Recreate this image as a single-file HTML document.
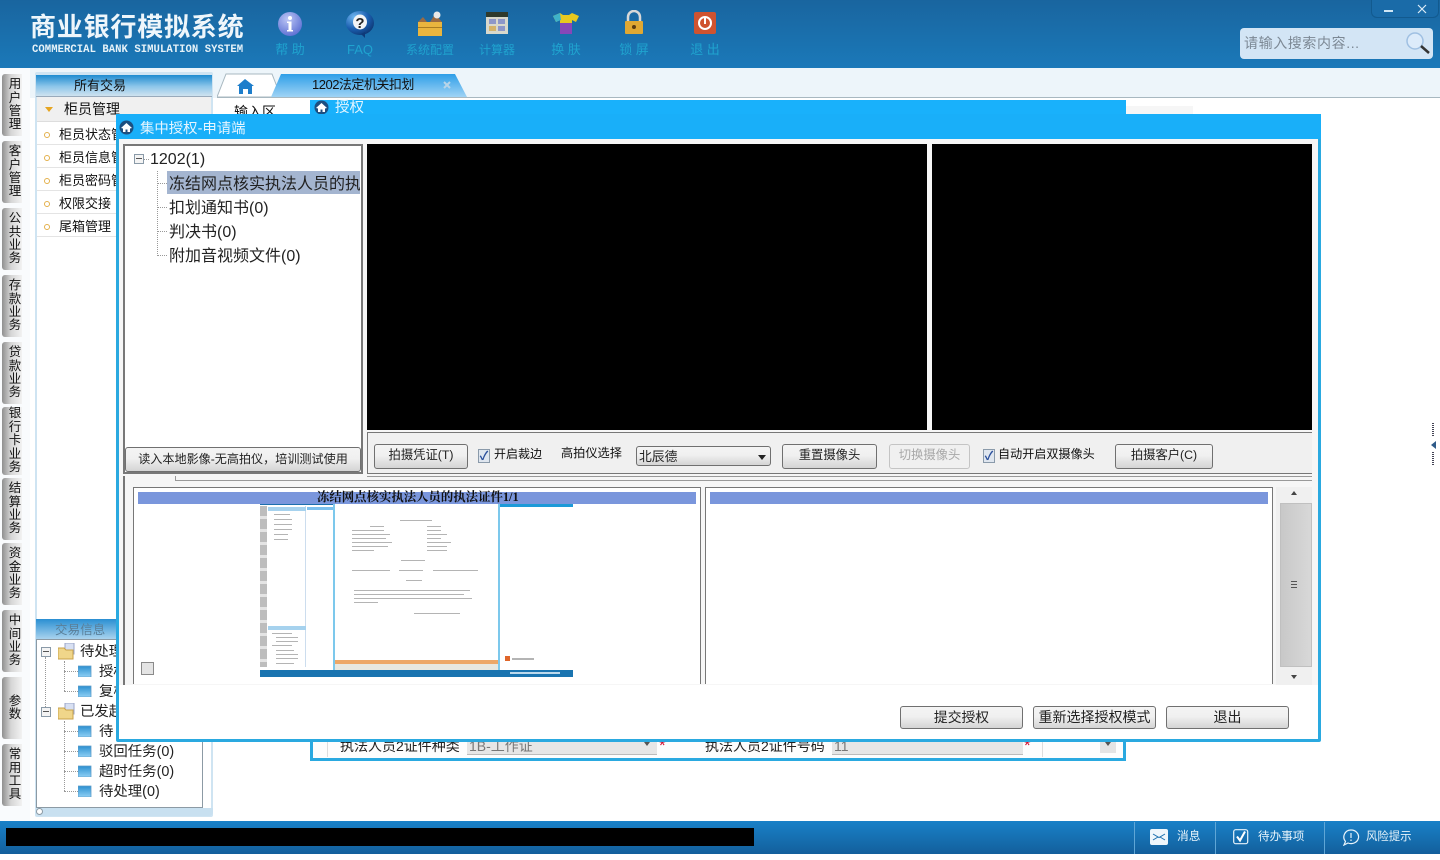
<!DOCTYPE html>
<html lang="zh"><head><meta charset="utf-8"><title>商业银行模拟系统</title>
<style>
html,body{margin:0;padding:0}
body{width:1440px;height:860px;position:relative;overflow:hidden;background:#fff;font-family:"Liberation Sans","Noto Sans CJK SC",sans-serif;color:#111}
.a{position:absolute;white-space:nowrap}
.nav{position:absolute;top:10px;width:70px;text-align:center}
.nav svg{display:block;margin:0 auto}
.nav span{position:absolute;top:32px;left:0;width:100%;font-size:13px;line-height:16px;color:#1fa3cf}
.vt{position:absolute;left:2px;width:20px;background:linear-gradient(90deg,#8f8f8f,#d6d6d6 45%,#f2f2f2);border-radius:3px 0 0 3px;font-size:12.500px;line-height:13.400px;text-align:center;display:flex;align-items:center;justify-content:center;color:#111}
.vt b{font-weight:400;display:block;width:13px;margin-left:6px;white-space:normal;word-break:break-all}
.mi{position:absolute;left:37px;width:174px;height:22px;border-bottom:1px solid #e4e4e4;font-size:13px;line-height:25px;background:#fff}
.mi i{position:absolute;left:7px;top:10px;width:4px;height:4px;border:1px solid #e3b04b;border-radius:50%}
.mi span{position:absolute;left:22px}
.btn{position:absolute;box-sizing:border-box;border:1px solid #707070;border-radius:2px;background:linear-gradient(#f4f4f4,#f0f0f0 45%,#d4d4d4);text-align:center;color:#222;white-space:nowrap}
.chk{position:absolute;box-sizing:border-box;width:12px;height:14px;border:1px solid #8a9aaa;background:#dfe6ef;color:#2a4f9c;font-size:12px;line-height:12px;text-align:center;font-weight:700}
.t{position:absolute;font-size:16px;line-height:22px;white-space:nowrap;color:#222}
.dv{position:absolute;border-left:1px dotted #999}
.dh{position:absolute;border-top:1px dotted #999}
.pm{position:absolute;box-sizing:border-box;width:10px;height:10px;border:1px solid #8a9aa8;background:#f4f4f4}
.pm:after{content:"";position:absolute;left:1px;top:3px;width:6px;height:1px;background:#555}
.bar{position:absolute;background:#b4b4b4;height:1px}
</style></head><body>

<!-- Header -->
<div class="a" style="left:0;top:0;width:1440px;height:68px;background:linear-gradient(#19659f,#1b79b9)"></div>
<div class="a" style="left:30px;top:11px;font-size:26px;line-height:32px;letter-spacing:.8px;color:#eef6fb;font-weight:700">商业银行模拟系统</div>
<div class="a" style="left:32px;top:44px;font-family:'Liberation Mono',monospace;font-size:10.600px;line-height:13px;font-weight:700;letter-spacing:.04px;color:#e6f2f8">COMMERCIAL BANK SIMULATION SYSTEM</div>

<div class="nav" style="left:255px"><svg width="28" height="28" viewBox="0 0 28 28"><defs><radialGradient id="g1" cx=".4" cy=".3" r=".8"><stop offset="0" stop-color="#bcc6f5"/><stop offset="1" stop-color="#5468d0"/></radialGradient></defs><circle cx="14" cy="14" r="12" fill="url(#g1)"/><circle cx="14" cy="8" r="2" fill="#fff"/><path d="M11 11.500h4.500V20H17v1.500h-6V20h1.500v-7H11z" fill="#fff"/></svg><span>帮 助</span></div>
<div class="nav" style="left:325px"><svg width="30" height="29" viewBox="0 0 30 29"><defs><radialGradient id="g2" cx=".3" cy=".25" r=".9"><stop offset="0" stop-color="#6fb6f0"/><stop offset=".55" stop-color="#1b5fb0"/><stop offset="1" stop-color="#0b2f66"/></radialGradient></defs><ellipse cx="15" cy="13" rx="14" ry="12" fill="url(#g2)"/><ellipse cx="15" cy="12" rx="7" ry="7.500" fill="#f2f4f6"/><path d="M16 24l4 4 0-6z" fill="#0e3a78"/><text x="15" y="18" font-size="15" font-weight="700" text-anchor="middle" fill="#222" font-family="Liberation Sans">?</text></svg><span>FAQ</span></div>
<div class="nav" style="left:395px"><svg width="28" height="28" viewBox="0 0 28 28"><rect x="2" y="12" width="24" height="14" fill="#e9b53e"/><rect x="2" y="17" width="24" height="1" fill="#a87c22"/><path d="M2 12l5-5 4 5zM14 12l5-8 7 8z" fill="#9a6a42"/><circle cx="21" cy="5" r="3.500" fill="#e8e8e8"/></svg><span style="font-size:12px">系统配置</span></div>
<div class="nav" style="left:462px"><svg width="24" height="26" viewBox="0 0 24 26"><rect x="1" y="2" width="22" height="22" fill="#d8d8cc"/><rect x="1" y="2" width="22" height="5" fill="#2f3a2d"/><rect x="4" y="9" width="7" height="5" fill="#8d97c9"/><rect x="13" y="9" width="7" height="5" fill="#8d97c9"/><rect x="4" y="16" width="7" height="5" fill="#d4b36a"/><rect x="13" y="16" width="7" height="5" fill="#8d97c9"/></svg><span style="font-size:12px">计算器</span></div>
<div class="nav" style="left:531px"><svg width="28" height="26" viewBox="0 0 28 26"><path d="M1 6l7-3 3 2h6l3-2 7 3-3 6-4-2v13H8V10l-4 2z" fill="#e8c91f"/><path d="M1 6l7-3 1 7-5 2z" fill="#3fb2c9"/><rect x="8" y="13" width="12" height="11" fill="#8747b8"/></svg><span>换 肤</span></div>
<div class="nav" style="left:599px"><svg width="22" height="26" viewBox="0 0 22 26"><path d="M5 12V7a6 6 0 0 1 12 0v5" fill="none" stroke="#d8d8d8" stroke-width="2.500"/><rect x="2" y="11" width="18" height="13" rx="1" fill="#e0a832"/><circle cx="11" cy="17" r="2" fill="#5a3b10"/></svg><span>锁 屏</span></div>
<div class="nav" style="left:670px"><svg width="24" height="26" viewBox="0 0 24 26"><rect x="1" y="2" width="22" height="22" rx="2" fill="#cf5330"/><circle cx="12" cy="13" r="6" fill="none" stroke="#fff" stroke-width="2"/><rect x="11" y="8" width="2" height="6" fill="#fff"/></svg><span>退 出</span></div>

<div class="a" style="left:1371px;top:0;width:68px;height:18px;background:#1a6ba8;border:1px solid #125a8f;border-top:0;box-sizing:border-box;border-radius:0 0 6px 6px"></div>
<div class="a" style="left:1384px;top:10px;width:9px;height:2px;background:#cfe6f5"></div>
<svg class="a" style="left:1416px;top:3px" width="12" height="12" viewBox="0 0 12 12"><path d="M2 2l8 8M10 2l-8 8" stroke="#dcecf7" stroke-width="1.200"/></svg>
<div class="a" style="left:1240px;top:28px;width:193px;height:31px;background:#d3e5f5;border-radius:4px"></div>
<div class="a" style="left:1244px;top:34px;font-size:14px;line-height:18px;letter-spacing:.6px;color:#7c8894">请输入搜索内容...</div>
<svg class="a" style="left:1405px;top:31px" width="26" height="24" viewBox="0 0 26 24"><circle cx="10" cy="10" r="8" fill="#dcebfa" stroke="#9fc0e2" stroke-width="1.500"/><path d="M16 15l8 7" stroke="#333" stroke-width="2.500"/></svg>

<!-- Tabs strip -->
<div class="a" style="left:0;top:68px;width:1440px;height:30px;background:#edf5fa"></div>
<div class="a" style="left:217px;top:97px;width:1223px;height:1px;background:#a8b8c0"></div>
<div class="a" style="left:0;top:68px;width:30px;height:753px;background:#f9fbfd"></div>
<svg class="a" style="left:217px;top:73px" width="255" height="25" viewBox="0 0 255 25">
<defs><linearGradient id="tb" x1="0" y1="0" x2="0" y2="1"><stop offset="0" stop-color="#2e9fe8"/><stop offset="1" stop-color="#9fd3f5"/></linearGradient></defs>
<path d="M0 24L9 1h46l9 23z" fill="#fff" stroke="#a8b8c0"/>
<path d="M54 24L64 1h174l12 23z" fill="url(#tb)"/>
<path d="M20 13l8-7 9 7h-2v8h-4v-5h-5v5h-4v-8z" fill="#1e7ecb"/>
<path d="M227 9l6 6M233 9l-6 6" stroke="#b8d4e8" stroke-width="2"/>
</svg>
<div class="a" style="left:312px;top:76px;font-size:13px;line-height:17px;letter-spacing:-.5px">1202法定机关扣划</div>

<!-- Left vertical tabs -->
<div class="vt" style="top:74px;height:62px"><b>用户管理</b></div>
<div class="vt" style="top:141px;height:62px"><b>客户管理</b></div>
<div class="vt" style="top:208px;height:62px"><b>公共业务</b></div>
<div class="vt" style="top:275px;height:62px"><b>存款业务</b></div>
<div class="vt" style="top:342px;height:62px"><b>贷款业务</b></div>
<div class="vt" style="top:407px;height:68px"><b>银行卡业务</b></div>
<div class="vt" style="top:478px;height:62px"><b>结算业务</b></div>
<div class="vt" style="top:543px;height:62px"><b>资金业务</b></div>
<div class="vt" style="top:610px;height:62px"><b>中间业务</b></div>
<div class="vt" style="top:677px;height:62px"><b>参数</b></div>
<div class="vt" style="top:744px;height:62px"><b>常用工具</b></div>

<!-- Left panel -->
<div class="a" style="left:35px;top:72px;width:178px;height:745px;background:#cfe4f2;border-radius:2px"></div>
<div class="a" style="left:37px;top:75px;width:174px;height:740px;background:#fff"></div>
<div class="a" style="left:36px;top:75px;width:176px;height:21px;background:linear-gradient(#1e8bd0,#8ec6ea 55%,#cfe3ef);border-bottom:1px solid #9ab"></div>
<div class="a" style="left:74px;top:77px;font-size:13px;line-height:18px">所有交易</div>
<div class="a" style="left:37px;top:97px;width:174px;height:24px;background:#f0f0f0;border-bottom:1px solid #ddd"></div>
<div class="a" style="left:45px;top:107px;width:0;height:0;border-left:4px solid transparent;border-right:4px solid transparent;border-top:5px solid #e6a521"></div>
<div class="a" style="left:64px;top:100px;font-size:14px;line-height:18px">柜员管理</div>
<div class="mi" style="top:122px"><i></i><span>柜员状态管理</span></div>
<div class="mi" style="top:145px"><i></i><span>柜员信息管理</span></div>
<div class="mi" style="top:168px"><i></i><span>柜员密码管理</span></div>
<div class="mi" style="top:191px"><i></i><span>权限交接</span></div>
<div class="mi" style="top:214px"><i></i><span>尾箱管理</span></div>

<!-- trade info -->
<div class="a" style="left:36px;top:619px;width:176px;height:20px;background:linear-gradient(#2a8fd2,#a9d3ee)"></div>
<div class="a" style="left:55px;top:621px;font-size:12.500px;line-height:18px;letter-spacing:.1px;color:#5a7f99">交易信息</div>
<div class="a" style="left:36px;top:639px;width:167px;height:169px;box-sizing:border-box;border:1px solid #8c9aa4;background:#fff"></div>
<div class="a" style="left:36px;top:808px;width:177px;height:8px;background:#c8e0f0;border-radius:0 0 4px 4px"></div>
<div class="a" style="left:36px;top:808px;width:5px;height:5px;border:1px solid #8c9aa4;border-radius:50%;background:#fff"></div>
<div class="pm" style="left:41px;top:647px"></div><div class="pm" style="left:41px;top:707px"></div>
<div class="dv" style="left:45px;top:657px;height:50px"></div>
<div class="dv" style="left:64px;top:661px;height:30px"></div>
<div class="dv" style="left:64px;top:721px;height:70px"></div>
<div class="dh" style="left:64px;top:671px;width:14px"></div><div class="dh" style="left:64px;top:691px;width:14px"></div>
<div class="dh" style="left:64px;top:731px;width:14px"></div><div class="dh" style="left:64px;top:751px;width:14px"></div><div class="dh" style="left:64px;top:771px;width:14px"></div><div class="dh" style="left:64px;top:791px;width:14px"></div>
<svg class="a" style="left:58px;top:643px" width="18" height="17" viewBox="0 0 18 17"><rect x="7" y="0" width="9" height="11" fill="#d8e0f2" stroke="#9aa6c8"/><path d="M0 5h6l2 2h7v9H0z" fill="#f0d68a" stroke="#c9a24a"/></svg>
<svg class="a" style="left:58px;top:703px" width="18" height="17" viewBox="0 0 18 17"><rect x="7" y="0" width="9" height="11" fill="#d8e0f2" stroke="#9aa6c8"/><path d="M0 5h6l2 2h7v9H0z" fill="#f0d68a" stroke="#c9a24a"/></svg>
<svg width="0" height="0" style="position:absolute"><defs><linearGradient id="fd" x1="0" y1="0" x2="0" y2="1"><stop offset="0" stop-color="#2b8fd0"/><stop offset="1" stop-color="#8fd0f5"/></linearGradient></defs></svg>
<svg class="a" style="left:78px;top:664px" width="14" height="13"><path d="M0 2h13v11H0z" fill="url(#fd)" stroke="#5d9cc8" stroke-width=".8"/></svg>
<svg class="a" style="left:78px;top:684px" width="14" height="13"><path d="M0 2h13v11H0z" fill="url(#fd)" stroke="#5d9cc8" stroke-width=".8"/></svg>
<svg class="a" style="left:78px;top:724px" width="14" height="13"><path d="M0 2h13v11H0z" fill="url(#fd)" stroke="#5d9cc8" stroke-width=".8"/></svg>
<svg class="a" style="left:78px;top:744px" width="14" height="13"><path d="M0 2h13v11H0z" fill="url(#fd)" stroke="#5d9cc8" stroke-width=".8"/></svg>
<svg class="a" style="left:78px;top:764px" width="14" height="13"><path d="M0 2h13v11H0z" fill="url(#fd)" stroke="#5d9cc8" stroke-width=".8"/></svg>
<svg class="a" style="left:78px;top:784px" width="14" height="13"><path d="M0 2h13v11H0z" fill="url(#fd)" stroke="#5d9cc8" stroke-width=".8"/></svg>
<div class="t" style="left:80px;top:641px;font-size:14.400px">待处理</div>
<div class="t" style="left:99px;top:661px;font-size:14.400px">授权</div>
<div class="t" style="left:99px;top:681px;font-size:14.400px">复核</div>
<div class="t" style="left:80px;top:701px;font-size:14.400px">已发起</div>
<div class="t" style="left:99px;top:721px;font-size:14.400px">待</div>
<div class="t" style="left:99px;top:741px;font-size:14.400px">驳回任务(0)</div>
<div class="t" style="left:99px;top:761px;font-size:14.400px">超时任务(0)</div>
<div class="t" style="left:99px;top:781px;font-size:14.400px">待处理(0)</div>

<!-- underlying content -->
<div class="a" style="left:234px;top:103px;font-size:14px;line-height:18px">输入区</div>
<div class="a" style="left:1126px;top:106px;width:67px;height:8px;background:#f6f6f6"></div>
<div class="a" style="left:310px;top:100px;width:816px;height:661px;box-sizing:border-box;border:3px solid #2aa9e0;border-top:0;background:#fdfdfd"></div>
<div class="a" style="left:310px;top:100px;width:816px;height:16px;background:#19b1fb"></div>
<svg class="a" style="left:313px;top:100px" width="17" height="15" viewBox="0 0 17 15"><circle cx="8.500" cy="7.500" r="7" fill="#1c4f80"/><path d="M3 8l5.500-5 5.500 5-2 .5v3.500H9.500V9.500h-2V12H5V8.500z" fill="#fff"/></svg>
<div class="a" style="left:335px;top:99px;font-size:14.500px;line-height:18px;color:#e4f5ff">授权</div>
<div class="a" style="left:327px;top:742px;width:1px;height:15px;background:#ddd"></div>
<div class="a" style="left:1042px;top:742px;width:1px;height:15px;background:#ddd"></div>
<div class="a" style="left:340px;top:737px;font-size:14px;line-height:18px;color:#222">执法人员2证件种类</div>
<div class="a" style="left:467px;top:741px;width:190px;height:13px;background:#e6e6e6;border-bottom:1px solid #bbb"></div>
<div class="a" style="left:469px;top:737px;font-size:14px;line-height:18px;color:#777">1B-工作证</div>
<div class="a" style="left:644px;top:742px;width:0;height:0;border-left:3px solid transparent;border-right:3px solid transparent;border-top:4px solid #555"></div>
<div class="a" style="left:659px;top:738px;font-size:17px;line-height:16px;color:#d01030">*</div>
<div class="a" style="left:705px;top:737px;font-size:14px;line-height:18px;color:#222">执法人员2证件号码</div>
<div class="a" style="left:832px;top:741px;width:191px;height:13px;background:#e6e6e6;border-bottom:1px solid #bbb"></div>
<div class="a" style="left:834px;top:737px;font-size:14px;line-height:18px;color:#777">11</div>
<div class="a" style="left:1024px;top:738px;font-size:17px;line-height:16px;color:#d01030">*</div>
<div class="a" style="left:1100px;top:741px;width:16px;height:12px;background:#e4e4e4"></div>
<div class="a" style="left:1105px;top:742px;width:0;height:0;border-left:3px solid transparent;border-right:3px solid transparent;border-top:4px solid #555"></div>

<!-- Modal -->
<div class="a" style="left:116px;top:114px;width:1205px;height:628px;box-sizing:border-box;border:3px solid #2aa9e0;border-radius:2px;background:#fff"></div>
<div class="a" style="left:116px;top:114px;width:1205px;height:25px;background:#19aff9"></div>
<svg class="a" style="left:118px;top:120px" width="17" height="15" viewBox="0 0 17 15"><circle cx="8.500" cy="7.500" r="7" fill="#1c4f80"/><path d="M3 8l5.500-5 5.500 5-2 .5v3.500H9.500V9.500h-2V12H5V8.500z" fill="#fff"/></svg>
<div class="a" style="left:140px;top:119px;font-size:14.400px;line-height:20px;color:#e4f5ff">集中授权-申请端</div>
<div class="a" style="left:119px;top:139px;width:1199px;height:546px;background:#f6f6f6"></div>

<!-- tree box -->
<div class="a" style="left:123px;top:144px;width:240px;height:330px;box-sizing:border-box;border:2px solid #787878;background:#fff"></div>
<div class="pm" style="left:134px;top:154px"></div>
<div class="dh" style="left:144px;top:159px;width:5px"></div>
<div class="t" style="left:150px;top:149px;font-size:16px">1202(1)</div>
<div class="dv" style="left:157px;top:171px;height:85px"></div>
<div class="dh" style="left:157px;top:183px;width:10px"></div><div class="dh" style="left:157px;top:207px;width:10px"></div><div class="dh" style="left:157px;top:231px;width:10px"></div><div class="dh" style="left:157px;top:255px;width:10px"></div>
<div class="a" style="left:167px;top:171px;width:193px;height:23px;background:#a4b5d0"></div>
<div class="t" style="left:169px;top:174px;width:191px;overflow:hidden;font-size:16px">冻结网点核实执法人员的执法证件</div>
<div class="t" style="left:169px;top:198px">扣划通知书(0)</div>
<div class="t" style="left:169px;top:222px">判决书(0)</div>
<div class="t" style="left:169px;top:246px">附加音视频文件(0)</div>
<div class="btn" style="left:125px;top:447px;width:236px;height:25px;font-size:12.100px;line-height:22px;border-radius:3px">读入本地影像-无高拍仪，培训测试使用</div>

<!-- video -->
<div class="a" style="left:367px;top:144px;width:560px;height:286px;background:#000"></div>
<div class="a" style="left:932px;top:144px;width:380px;height:286px;background:#000"></div>
<div class="a" style="left:367px;top:432px;width:945px;height:41px;background:#f0f0f0;border-top:1px solid #777;border-left:1px solid #777;box-sizing:border-box"></div>
<div class="a" style="left:367px;top:473px;width:945px;height:1px;background:#777"></div>
<div class="a" style="left:175px;top:480px;width:1137px;height:1px;background:#999"></div>
<div class="a" style="left:367px;top:476px;width:945px;height:1px;background:#999"></div>
<div class="a" style="left:175px;top:476px;width:1px;height:5px;background:#999"></div>

<div class="btn" style="left:374px;top:444px;width:94px;height:25px;font-size:12.300px;line-height:21px;border-radius:3px">拍摄凭证(T)</div>
<div class="chk" style="left:478px;top:449px">✓</div>
<div class="a" style="left:494px;top:445px;font-size:12px;line-height:18px">开启裁边</div>
<div class="a" style="left:561px;top:444px;font-size:12.200px;line-height:18px">高拍仪选择</div>
<div class="btn" style="left:636px;top:446px;width:135px;height:20px;font-size:12.800px;line-height:19px;text-align:left;padding-left:2px;border-radius:3px">北辰德</div>
<div class="a" style="left:758px;top:455px;width:0;height:0;border-left:4px solid transparent;border-right:4px solid transparent;border-top:5px solid #222"></div>
<div class="btn" style="left:782px;top:444px;width:95px;height:25px;font-size:12.300px;line-height:21px;border-radius:3px">重置摄像头</div>
<div class="btn" style="left:889px;top:444px;width:81px;height:25px;font-size:12.300px;line-height:21px;color:#a8a8a8;background:#f0f0f0;border-color:#c4c4c4;border-radius:3px">切换摄像头</div>
<div class="chk" style="left:983px;top:449px">✓</div>
<div class="a" style="left:998px;top:445px;font-size:12.100px;line-height:18px">自动开启双摄像头</div>
<div class="btn" style="left:1115px;top:444px;width:98px;height:25px;font-size:12.300px;line-height:21px;border-radius:3px">拍摄客户(C)</div>

<!-- image panels -->
<div class="a" style="left:123px;top:476px;width:2px;height:209px;background:#777"></div>
<div class="a" style="left:133px;top:487px;width:568px;height:197px;box-sizing:border-box;border:1px solid #777;border-bottom:0;background:#fff"></div>
<div class="a" style="left:138px;top:492px;width:558px;height:12px;background:#7a96dc"></div>
<div class="a" style="left:317px;top:489px;font-family:'Liberation Serif','Noto Serif CJK SC',serif;font-weight:700;font-size:12.400px;line-height:16px;color:#111">冻结网点核实执法人员的执法证件1/1</div>
<div class="a" style="left:705px;top:487px;width:568px;height:197px;box-sizing:border-box;border:1px solid #777;border-bottom:0;background:#fff"></div>
<div class="a" style="left:710px;top:492px;width:558px;height:12px;background:#7a96dc"></div>
<div class="chk" style="left:141px;top:662px;width:13px;height:13px;background:#e4e4e4;border-color:#8a8a8a"></div>

<!-- thumbnail -->
<div class="a" style="left:260px;top:504px;width:313px;height:173px;background:#fff;overflow:hidden">
 <div class="a" style="left:0;top:0;width:313px;height:1px;background:#1c6fae"></div>
 <div class="a" style="left:0;top:2px;width:7px;height:161px;background:repeating-linear-gradient(#bdbdbd 0 10px,#e4e4e4 10px 13px)"></div>
 <div class="a" style="left:8px;top:2px;width:38px;height:161px;border-right:1px solid #cde;box-sizing:border-box"></div>
 <div class="a" style="left:8px;top:3px;width:38px;height:4px;background:#a6d2ee"></div>
 <div class="bar" style="left:14px;top:10px;width:16px"></div><div class="bar" style="left:14px;top:15px;width:18px"></div><div class="bar" style="left:14px;top:20px;width:18px"></div><div class="bar" style="left:14px;top:25px;width:18px"></div><div class="bar" style="left:14px;top:30px;width:14px"></div><div class="bar" style="left:14px;top:35px;width:14px"></div>
 <div class="a" style="left:8px;top:122px;width:38px;height:4px;background:#a6d2ee"></div>
 <div class="bar" style="left:12px;top:129px;width:20px"></div><div class="bar" style="left:16px;top:133px;width:22px"></div><div class="bar" style="left:16px;top:137px;width:22px"></div><div class="bar" style="left:12px;top:141px;width:20px"></div><div class="bar" style="left:16px;top:146px;width:18px"></div><div class="bar" style="left:16px;top:150px;width:22px"></div><div class="bar" style="left:16px;top:154px;width:22px"></div><div class="bar" style="left:16px;top:159px;width:18px"></div>
 <div class="a" style="left:47px;top:3px;width:26px;height:3px;background:#7cc0ee"></div>
 <div class="a" style="left:239px;top:0;width:74px;height:3px;background:#1c9ad8"></div>
 <div class="a" style="left:73px;top:0;width:167px;height:166px;box-sizing:border-box;border:2px solid #7cc8ec;border-top:0;background:#fff"></div>
 <div class="bar" style="left:140px;top:16px;width:32px"></div>
 <div class="bar" style="left:110px;top:22px;width:14px"></div><div class="bar" style="left:167px;top:22px;width:14px"></div>
 <div class="bar" style="left:92px;top:26px;width:32px"></div><div class="bar" style="left:167px;top:26px;width:14px"></div>
 <div class="bar" style="left:92px;top:30px;width:38px"></div><div class="bar" style="left:167px;top:30px;width:20px"></div>
 <div class="bar" style="left:92px;top:34px;width:34px"></div><div class="bar" style="left:167px;top:34px;width:14px"></div>
 <div class="bar" style="left:92px;top:38px;width:40px"></div><div class="bar" style="left:167px;top:38px;width:24px"></div>
 <div class="bar" style="left:92px;top:42px;width:36px"></div><div class="bar" style="left:167px;top:42px;width:20px"></div>
 <div class="bar" style="left:92px;top:46px;width:22px"></div><div class="bar" style="left:167px;top:46px;width:20px"></div>
 <div class="bar" style="left:141px;top:56px;width:24px"></div>
 <div class="bar" style="left:92px;top:66px;width:38px"></div><div class="bar" style="left:139px;top:66px;width:24px"></div><div class="bar" style="left:173px;top:66px;width:45px"></div>
 <div class="bar" style="left:146px;top:76px;width:16px"></div>
 <div class="bar" style="left:94px;top:86px;width:116px"></div><div class="bar" style="left:94px;top:90px;width:110px"></div><div class="bar" style="left:94px;top:94px;width:118px"></div><div class="bar" style="left:94px;top:98px;width:24px"></div>
 <div class="bar" style="left:154px;top:109px;width:46px"></div>
 <div class="a" style="left:75px;top:156px;width:163px;height:4px;background:#eda868"></div>
 <div class="a" style="left:75px;top:160px;width:163px;height:6px;background:#e8e8e0"></div>
 <div class="a" style="left:0;top:166px;width:313px;height:7px;background:#1a74b0"></div>
 <div class="a" style="left:245px;top:152px;width:5px;height:5px;background:#e0662a"></div>
 <div class="bar" style="left:252px;top:154px;width:22px;height:2px"></div>
 <div class="a" style="left:250px;top:168px;width:50px;height:2px;background:#bcd9ec"></div>
</div>

<!-- scrollbar -->
<div class="a" style="left:1276px;top:487px;width:36px;height:198px;background:#f0f0f0"></div>
<div class="a" style="left:1280px;top:503px;width:32px;height:164px;background:linear-gradient(90deg,#c8c8c8,#d8d8d8);border:1px solid #c0c0c0;box-sizing:border-box"></div>
<div class="a" style="left:1291px;top:491px;width:0;height:0;border-left:3px solid transparent;border-right:3px solid transparent;border-bottom:4px solid #444"></div>
<div class="a" style="left:1291px;top:675px;width:0;height:0;border-left:3px solid transparent;border-right:3px solid transparent;border-top:4px solid #444"></div>
<div class="a" style="left:1291px;top:581px;width:6px;height:7px;background:repeating-linear-gradient(#555 0 1px,transparent 1px 3px)"></div>

<!-- modal footer -->
<div class="btn" style="left:900px;top:706px;width:123px;height:23px;font-size:13.800px;line-height:21px;border-radius:3px">提交授权</div>
<div class="btn" style="left:1033px;top:706px;width:123px;height:23px;font-size:14px;line-height:21px;border-radius:3px">重新选择授权模式</div>
<div class="btn" style="left:1166px;top:706px;width:123px;height:23px;font-size:14px;line-height:21px;border-radius:3px">退出</div>

<!-- right handle -->
<div class="a" style="left:1432px;top:423px;width:2px;height:14px;background:repeating-linear-gradient(#445 0 1px,transparent 1px 2px)"></div>
<div class="a" style="left:1432px;top:452px;width:2px;height:14px;background:repeating-linear-gradient(#445 0 1px,transparent 1px 2px)"></div>
<div class="a" style="left:1431px;top:441px;width:0;height:0;border-top:4px solid transparent;border-bottom:4px solid transparent;border-right:5px solid #2f5a88"></div>

<!-- Status bar -->
<div class="a" style="left:0;top:821px;width:1440px;height:33px;background:linear-gradient(#1981c8,#135f9c)"></div>
<div class="a" style="left:6px;top:828px;width:748px;height:18px;background:#000"></div>
<div class="a" style="left:1134px;top:822px;width:1px;height:32px;background:#5fa6d6"></div>
<div class="a" style="left:1215px;top:822px;width:1px;height:32px;background:#5fa6d6"></div>
<div class="a" style="left:1324px;top:822px;width:1px;height:32px;background:#5fa6d6"></div>
<svg class="a" style="left:1150px;top:829px" width="18" height="16" viewBox="0 0 18 16"><rect width="18" height="16" rx="2" fill="#eef6fb"/><path d="M3 5l6 3.500 6-3.500M3 11l5-3M15 11l-5-3" fill="none" stroke="#1a6fae" stroke-width="1"/></svg>
<div class="a" style="left:1177px;top:828px;font-size:11.700px;line-height:18px;color:#e8f4fb">消息</div>
<svg class="a" style="left:1233px;top:829px" width="16" height="16" viewBox="0 0 16 16"><rect x=".7" y=".7" width="14" height="14" rx="2" fill="none" stroke="#e8f4fb" stroke-width="1.200"/><path d="M4 7.500l3 4 5-9" fill="none" stroke="#fff" stroke-width="2"/></svg>
<div class="a" style="left:1258px;top:828px;font-size:11.600px;line-height:18px;color:#e8f4fb">待办事项</div>
<svg class="a" style="left:1342px;top:829px" width="18" height="17" viewBox="0 0 18 17"><path d="M9 1a7.500 6.800 0 1 1-3 13l-4 2 1.500-3.500A7 7 0 0 1 9 1z" fill="none" stroke="#e8f4fb" stroke-width="1.200"/><path d="M9 4v5M9 10.500v1.500" stroke="#e8f4fb" stroke-width="1.200"/></svg>
<div class="a" style="left:1366px;top:828px;font-size:11.400px;line-height:18px;color:#e8f4fb">风险提示</div>

</body></html>
